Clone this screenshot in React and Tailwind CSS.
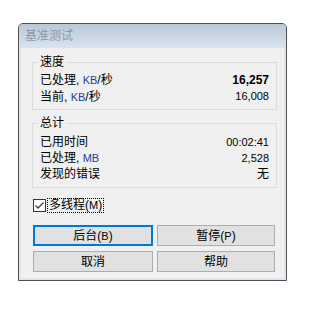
const font = { fontFamily: '"Liberation Sans", "Noto Sans CJK SC", sans-serif' };

const Unit = ({ children }) => <span className="text-[#1f3f9a] text-[11px]">{children}</span>;

const Row = ({ label, value, bold }) => (
  <div className="flex items-center justify-between h-[16px] leading-[16px]">
    <span className="text-[12px] text-black">{label}</span>
    <span className={`text-[11px] text-black ${bold ? 'font-bold text-[12px]' : ''}`}>{value}</span>
  </div>
);

const Group = ({ title, className, children }) => (
  <div className={`relative ml-[11px] w-[245px] border border-[#dcdcdc] px-[7px] ${className}`}>
    <span className="absolute -top-[9px] left-[5px] bg-[#f0f0f0] px-[2px] text-[12px] leading-[16px] text-black">
      {title}
    </span>
    {children}
  </div>
);

const Button = ({ children, focused, className }) => (
  <button
    className={`h-[21px] bg-[#e1e1e1] text-[12px] leading-[16px] text-black flex items-center justify-center ${
      focused ? 'border-2 border-[#0078d7]' : 'border border-[#adadad]'
    } ${className}`}
  >
    {children}
  </button>
);

export default function App() {
  return (
    <div className="w-[312px] h-[322px] bg-white pt-[23px] pl-[18px]" style={font}>
      <div className="w-[269px] h-[258px] border border-[#4f4f4f] rounded-t-[5px] overflow-hidden flex flex-col bg-[#dde6f0]">
        {/* title bar */}
        <div className="h-[24px] shrink-0 bg-gradient-to-b from-[#b9c8d8] to-[#d9e4ef] pl-[6px] flex items-center">
          <span className="text-[12px] text-[#8a97a5] leading-[16px]">基准测试</span>
        </div>

        {/* client */}
        <div className="mx-[2px] h-[230px] bg-[#f0f0f0] pt-[14px]">
          <Group title="速度" className="h-[48px] pt-[8px]">
            <div className="flex items-center justify-between h-[17px]">
              <span className="text-[12px]">已处理, <Unit>KB</Unit>/秒</span>
              <span className="text-[12px] font-bold">16,257</span>
            </div>
            <div className="flex items-center justify-between h-[17px]">
              <span className="text-[12px]">当前, <Unit>KB</Unit>/秒</span>
              <span className="text-[11px]">16,008</span>
            </div>
          </Group>

          <Group title="总计" className="mt-[13px] h-[65px] pt-[10px]">
            <Row label="已用时间" value="00:02:41" />
            <Row label={<>已处理, <Unit>MB</Unit></>} value="2,528" />
            <Row label="发现的错误" value={<span className="text-[12px]">无</span>} />
          </Group>

          {/* checkbox */}
          <div className="mt-[10px] ml-[12px] flex items-center h-[15px] gap-[1px]">
            <div className="w-[13px] h-[13px] border border-[#333333] bg-white flex items-center justify-center">
              <svg width="11" height="11" viewBox="0 0 11 11">
                <path d="M1.5 5.5 L4 8 L9.5 2.5" fill="none" stroke="#3c3c3c" strokeWidth="1.3" />
              </svg>
            </div>
            <span className="border border-dotted border-black px-[1px] h-[15px] text-[12px] leading-[13px] flex items-center">
              多线程(<span className="text-[11px]">M</span>)
            </span>
          </div>

          {/* buttons */}
          <div className="mt-[12px] ml-[12px] flex flex-col gap-[5px]">
            <div className="flex gap-[4px]">
              <Button focused className="w-[120px]">后台(<span className="text-[11px]">B</span>)</Button>
              <Button className="w-[118px]">暂停(<span className="text-[11px]">P</span>)</Button>
            </div>
            <div className="flex gap-[4px]">
              <Button className="w-[120px]">取消</Button>
              <Button className="w-[118px]">帮助</Button>
            </div>
          </div>
        </div>
      </div>
    </div>
  );
}
